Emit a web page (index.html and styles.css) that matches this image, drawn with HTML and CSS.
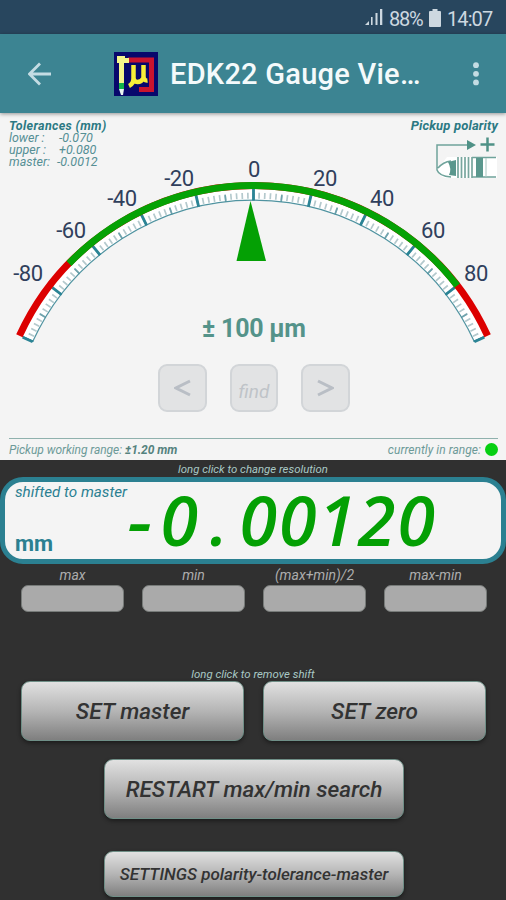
FILE: index.html
```html
<!DOCTYPE html>
<html lang="en">
<head>
<meta charset="utf-8">
<title>EDK22 Gauge Viewer</title>
<link rel="stylesheet" href="styles.css">
</head>
<body>
<div class="status">
  <svg class="signal" width="18" height="18" viewBox="0 0 18 18"><path d="M0 17l4-4v4zM6 9h1.600v8H6zM10.500 5h2v12h-2zM15 1h2.300v16H15z"/></svg>
  <span class="pct">88%</span>
  <svg class="battery" width="12" height="18" viewBox="0 0 12 18"><path d="M3.500 0h5v2H11q1 0 1 1v14q0 1-1 1H1q-1 0-1-1V3q0-1 1-1h2.500z"/></svg>
  <span class="clock">14:07</span>
</div>
<header class="bar">
  <svg class="back" width="24" height="24" viewBox="0 0 24 24"><path d="M23 12H2.500M12 1.500L1.500 12 12 22.500"/></svg>
  <svg class="logo" width="44" height="44" viewBox="0 0 44 44">
    <rect width="44" height="44" fill="#08086c"/>
    <path d="M14 8H37.500V37.500H25" fill="none" stroke="#c9142e" stroke-width="5"/>
    <path d="M3 4h8v2h4v5h-5v21H5V11H3z" fill="#f5f58a"/>
    <path d="M5 31h5v6H5z" fill="#12b34a"/><path d="M5 37h5l-1 6H7z" fill="#eaf5f0"/>
    <path d="M19.500 13v13q0 4 4 4t6-4V13M29.500 24q0 5 4 4.500M19.500 26q0 6-4.500 8" fill="none" stroke="#f7ee38" stroke-width="4.500"/>
  </svg>
  <h1>EDK22 Gauge Vie…</h1>
  <svg class="more" width="8" height="24" viewBox="0 0 8 24"><circle cx="4" cy="3.200" r="2.900"/><circle cx="4" cy="11.800" r="2.900"/><circle cx="4" cy="20.400" r="2.900"/></svg>
</header>
<main class="panel">
  <section class="gauge">
    <svg class="dial" width="506" height="240" viewBox="0 113 506 240">
      <g fill="none">
        <path d="M27.600 339.500A248.500 248.500 0 0 1 479.400 339.500" stroke="#fff" stroke-width="12"/>
        <path d="M29 340A246.800 246.800 0 0 1 478 340" pathLength="200" stroke="#b4c9cd" stroke-width="6" stroke-dasharray=".6 1.400" stroke-dashoffset=".3"/>
        <path d="M29.800 340.600A246 246 0 0 1 477.200 340.600" pathLength="200" stroke="#6fa3ad" stroke-width="7" stroke-dasharray=".6 9.400" stroke-dashoffset=".3"/>
        <path d="M32.600 341.800A243 243 0 0 1 474.400 341.800" stroke="#5093a0" stroke-width="1.200"/>
        <path d="M27.600 339.500A248.500 248.500 0 0 1 479.400 339.500" pathLength="200" stroke="#2b8495" stroke-width="12" stroke-dasharray="1 19" stroke-dashoffset=".5"/>
        <path d="M32.600 341.800L22.600 337.300M474.400 341.800L484.400 337.300" stroke="#2b8495" stroke-width="2.600"/>
        <path d="M19.400 335.800A257.500 257.500 0 0 1 487.600 335.800" stroke="#dc0000" stroke-width="7"/>
        <path d="M19.400 335.800A257.500 257.500 0 0 1 487.600 335.800" pathLength="200" stroke="#05a205" stroke-width="7" stroke-dasharray="150 200" stroke-dashoffset="-30"/>
      </g>
      <path d="M250.500 201L266 261H236.500z" fill="#04a004"/>
      <g class="ticks">
        <text x="28" y="281">-80</text><text x="71" y="238">-60</text><text x="122" y="206">-40</text><text x="179" y="186">-20</text>
        <text x="254" y="177">0</text><text x="325" y="186">20</text><text x="382" y="206">40</text><text x="433" y="238">60</text><text x="476" y="281">80</text>
      </g>
      <text class="range" x="254" y="337" textLength="104">± 100 µm</text>
    </svg>
    <div class="tol">
      <b>Tolerances (mm)</b>
      <div><span>lower :</span><span class="v1">-0.070</span></div>
      <div><span>upper :</span><span class="v1">+0.080</span></div>
      <div><span>master:</span><span>-0.0012</span></div>
    </div>
    <div class="polarity">
      <b>Pickup polarity</b>
      <svg width="64" height="44" viewBox="0 0 64 44">
        <path d="M13 22h50v21H11q-7-2-8-8z" fill="#fff"/>
        <path d="M3 31V10H33M4 33q5-6 13-7M3 28v7q2 6 14 7M38 22.500H62M38 42H62" fill="none" stroke="#6fa39b" stroke-width="1.500"/>
        <path d="M33 5l9 5-9 5z" fill="#4f9186"/>
        <path d="M46.500 9.500h14M53.500 2.500v14" stroke="#4f9186" stroke-width="2.500"/>
        <path d="M14 27l8-2v16l-7-1q3-6-1-13zM42 23h7v19h-7z" fill="#5a978d"/>
        <path d="M24 22v21M27.500 22v21M31 22v21M34.500 22v21M38 22v21" stroke="#78a69e" stroke-width="1.700"/>
        <path d="M52 23v19" stroke="#a9c6c1" stroke-width="1"/>
      </svg>
    </div>
  </section>
  <div class="nav">
    <button><svg width="17" height="18" viewBox="0 0 17 18"><path d="M16 2L2 9l14 7"/></svg></button>
    <button class="find">find</button>
    <button><svg width="17" height="18" viewBox="0 0 17 18"><path d="M1 2l14 7-14 7"/></svg></button>
  </div>
  <footer class="working"><span class="left">Pickup working range: <b>±1.20 mm</b></span><span class="right">currently in range:</span><i class="led"></i></footer>
</main>
<p class="hint res">long click to change resolution</p>
<section class="lcd">
  <div class="labels"><span class="shift">shifted to master</span><b>mm</b></div>
  <div class="digits"><span>-</span><span>0</span><span>.</span><span>0</span><span>0</span><span>1</span><span>2</span><span>0</span></div>
</section>
<section class="stats">
  <div><label>max</label><output></output></div>
  <div><label>min</label><output></output></div>
  <div><label>(max+min)/2</label><output></output></div>
  <div><label>max-min</label><output></output></div>
</section>
<p class="hint shifthint">long click to remove shift</p>
<section class="actions">
  <button class="key">SET master</button>
  <button class="key">SET zero</button>
</section>
<button class="key wide">RESTART max/min search</button>
<button class="key wide settings">SETTINGS polarity-tolerance-master</button>
</body>
</html>
```
FILE: styles.css
```css
* { box-sizing: border-box; }
body {
  margin: 0; width: 506px; height: 900px; overflow: hidden;
  background: #303030; font-family: Roboto, "Liberation Sans", sans-serif;
}
button { padding: 0; font-family: inherit; }
p { margin: 0; }

.status { height: 34px; background: #28465e; display: flex; align-items: center; padding: 3px 13px 0 0; justify-content: flex-end; color: #cdd8e0; font-size: 20px; }
.status svg { fill: #cdd8e0; }
.signal { margin: 0 6px 3px 0; }
.battery { margin: 0 6px 2px 5px; }
.pct { width: 35px; letter-spacing: -1.2px; white-space: nowrap; }
.clock { width: 46px; letter-spacing: -.9px; }

.bar { height: 79px; background: #3c8492; display: flex; align-items: center; padding: 0 26px 0 28px; position: relative; box-shadow: 0 1px 4px rgba(0,0,0,.4); z-index: 1; }
.back { fill: none; stroke: #c4dce3; stroke-width: 2.8; }
.logo { margin: 0 12px 0 62px; }
.bar h1 { margin: 0; flex: 1; font-size: 29px; font-weight: 500; color: #f4fafb; white-space: nowrap; letter-spacing: .25px; }
.more { fill: #c4dce3; }

.panel { height: 347px; background: #f4f4f4; display: flex; flex-direction: column; }
.gauge { height: 240px; position: relative; }
.dial { display: block; }
.ticks text { font-size: 22px; fill: #303f5c; text-anchor: middle; letter-spacing: -.4px; }
.range { font-size: 25px; font-weight: 700; fill: #54938a; text-anchor: middle; }
.tol { position: absolute; left: 9px; top: 6px; font-size: 12.5px; line-height: 12px; font-style: italic; color: #568f94; }
.tol b { display: block; color: #2b7983; letter-spacing: .35px; line-height: 13px; }
.tol div { display: flex; }
.tol div span:first-child { width: 48px; }
.tol .v1 { padding-left: 2px; }
.polarity { position: absolute; right: 8px; top: 5px; width: 90px; font-size: 13px; line-height: 15px; font-style: italic; color: #2b7983; text-align: right; white-space: nowrap; }
.polarity b { letter-spacing: .15px; }
.polarity svg { display: block; margin: 2px 0 0 26px; }

.nav { display: flex; justify-content: center; gap: 23px; padding: 11px 0 0 2px; height: 85px; }
.nav button { width: 48.500px; height: 48px; border: 2px solid #d2d5d8; border-radius: 9px; background: #e2e3e4; color: #bfc3c8; font-size: 19px; font-style: italic; }
.nav svg { fill: none; stroke: #b9bec5; stroke-width: 3; display: block; margin: 0 auto; }
.nav .find { padding-top: 7px; }

.working { margin: 0 8px 0 9px; height: 22px; border-top: 1.500px solid #8fb1ad; display: flex; align-items: center; font-size: 12px; font-style: italic; color: #6d9a98; }
.working b { color: #55827e; }
.left { flex: 1; letter-spacing: -.05px; }
.right { letter-spacing: .05px; }
.led { width: 13px; height: 13px; border-radius: 50%; background: #06cf12; margin: -1px 0 0 4px; }

.hint { text-align: center; color: #a9c9c6; font-size: 11.400px; font-style: italic; }
.res { height: 17px; line-height: 18px; }
.lcd { height: 87px; border: 5px solid #2b8091; border-radius: 23px; background: #f4f4f4; display: flex; }
.labels { width: 115px; padding: 1px 0 3px 10px; display: flex; flex-direction: column; justify-content: space-between; color: #2b8091; white-space: nowrap; }
.shift { font-size: 15.2px; font-style: italic; }
.labels b { font-size: 22px; line-height: 24px; }
.digits { display: flex; font: italic 600 68px/76px "Open Sans", "Noto Sans", sans-serif; color: #04a004; }
.digits span { width: 39.500px; text-align: center; }
.digits span:first-child { transform: scaleX(1.15); }

.stats { display: grid; grid-template-columns: repeat(4, 103px); gap: 18px; margin: 1px 0 0 21px; height: 102px; }
.stats label { display: block; text-align: center; height: 20px; line-height: 20px; font-size: 14px; font-style: italic; color: #adadad; }
.stats output { display: block; height: 27px; border: 1px solid #777b79; border-radius: 7px; background: #aaa; }
.shifthint { height: 14px; line-height: 14px; }

.actions { display: flex; gap: 19px; margin: 0 0 18px 21px; }
.key { display: flex; align-items: center; justify-content: center; width: 223px; height: 60px; border: 1.500px solid #6f8f87; border-radius: 9px; background: linear-gradient(#e1e1e1, #b5b5b5 50%, #7f7f7f); box-shadow: 0 2px 4px rgba(0,0,0,.45); color: #333; font-size: 22.600px; font-style: italic; font-weight: 500; white-space: nowrap; }
.wide { width: 300px; margin: 0 0 32px 104px; }
.settings { height: 46px; margin-bottom: 0; font-size: 17px; }
```
